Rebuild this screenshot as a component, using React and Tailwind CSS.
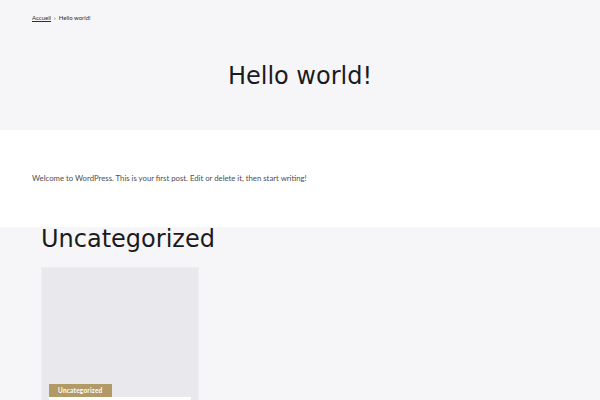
import React from 'react';

const heading = { fontFamily: '"DejaVu Sans", sans-serif' };
const body = { fontFamily: 'Lato, "Noto Sans", sans-serif' };

export default function App() {
  return (
    <div className="w-[600px] h-[400px] overflow-hidden bg-[#f6f6f8] text-[#1b1b1f]" style={body}>
      {/* Page header */}
      <header className="h-[130px] bg-[#f6f6f8] px-8 pt-[13px]">
        <nav className="flex items-center gap-[3px] text-[6px] leading-[10px] text-[#2e2e33]">
          <a href="#" className="underline">Accueil</a>
          <span>›</span>
          <span>Hello world!</span>
        </nav>
        <h1 className="mt-[35px] text-center text-[24px] leading-[36px] font-normal" style={heading}>
          Hello world!
        </h1>
      </header>

      {/* Post content */}
      <section className="h-[97px] bg-white px-8 pt-[42px]">
        <p className="text-[7.75px] leading-[12px] text-[#4d4d53]">
          Welcome to WordPress. This is your first post. Edit or delete it, then start writing!
        </p>
      </section>

      {/* Related category */}
      <section className="px-[41px]">
        <h2 className="text-[24px] leading-[24px] font-normal" style={heading}>
          Uncategorized
        </h2>
        <div className="mt-[16px] w-[158px] h-[160px] bg-[#e9e8ed] border border-[#eeeef1] pt-[116px] px-[7px]">
          <span className="block w-fit bg-[#b29a67] px-[9px] text-[6.5px] leading-[13px] font-bold tracking-[0.2px] text-white">
            Uncategorized
          </span>
          <div className="h-[20px] bg-white" />
        </div>
      </section>
    </div>
  );
}
